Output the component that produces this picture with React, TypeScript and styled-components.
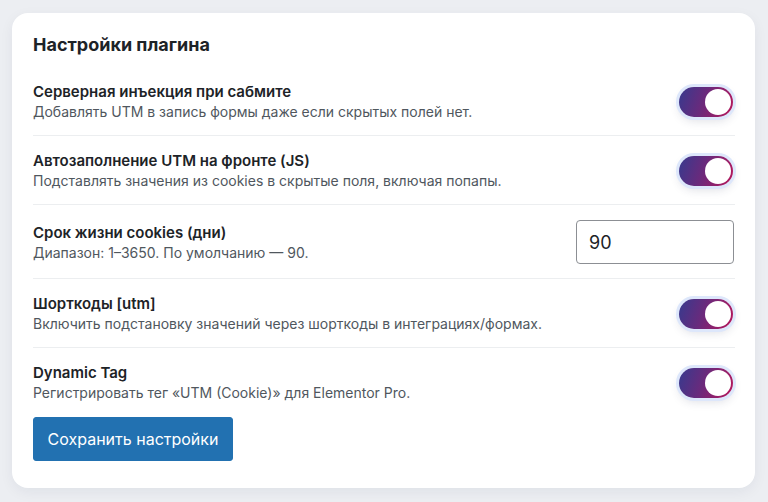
import styled, { createGlobalStyle } from 'styled-components';

const Global = createGlobalStyle`
  html, body {
    margin: 0;
    background: #eceef2;
    font-family: Inter, 'Noto Sans', sans-serif;
  }
`;

const settings = [
  { title: 'Серверная инъекция при сабмите', desc: 'Добавлять UTM в запись формы даже если скрытых полей нет.', kind: 'toggle' },
  { title: 'Автозаполнение UTM на фронте (JS)', desc: 'Подставлять значения из cookies в скрытые поля, включая попапы.', kind: 'toggle' },
  { title: 'Срок жизни cookies (дни)', desc: 'Диапазон: 1–3650. По умолчанию — 90.', kind: 'input' },
  { title: 'Шорткоды [utm]', desc: 'Включить подстановку значений через шорткоды в интеграциях/формах.', kind: 'toggle' },
  { title: 'Dynamic Tag', desc: 'Регистрировать тег «UTM (Cookie)» для Elementor Pro.', kind: 'toggle' },
];

export default function App() {
  return (
    <>
      <Global />
      <Page>
        <Card>
          <Title>Настройки плагина</Title>
          {settings.map((s, i) => (
            <Row key={s.title} $last={i === settings.length - 1}>
              <Text>
                <Label>{s.title}</Label>
                <Desc>{s.desc}</Desc>
              </Text>
              {s.kind === 'toggle' ? (
                <Switch>
                  <Knob />
                </Switch>
              ) : (
                <NumberInput defaultValue="90" />
              )}
            </Row>
          ))}
          <SaveButton>Сохранить настройки</SaveButton>
        </Card>
      </Page>
    </>
  );
}

const Page = styled.div`
  padding: 13px 13px 14px 12px;
  height: 502px;
  box-sizing: border-box;
`;

const Card = styled.div`
  background: #fff;
  border-radius: 16px;
  box-shadow: 0 4px 14px rgba(20, 30, 60, 0.06);
  padding: 20px 20px 26px 21px;
  height: 100%;
  box-sizing: border-box;
`;

const Title = styled.h2`
  margin: 0 0 10px;
  font-size: 18px;
  font-weight: 700;
  color: #1d2327;
  line-height: 24px;
`;

const Row = styled.div<{ $last?: boolean }>`
  display: flex;
  align-items: center;
  justify-content: space-between;
  padding: 15px 0 14px;
  box-sizing: border-box;
  border-bottom: ${(p) => (p.$last ? 'none' : '1px solid #eceef0')};
`;

const Text = styled.div`
  display: flex;
  flex-direction: column;
  gap: 2px;
`;

const Label = styled.div`
  font-size: 15px;
  font-weight: 600;
  color: #1d2327;
  line-height: 19px;
`;

const Desc = styled.div`
  font-size: 14px;
  color: #50575e;
  line-height: 18px;
`;

const Switch = styled.div`
  width: 54px;
  height: 30px;
  margin-right: 2px;
  border-radius: 15px;
  background: linear-gradient(110deg, #363a8e 0%, #6a2a7c 45%, #b8165a 100%);
  box-shadow: 0 0 0 3px #dde7fb, 0 4px 10px rgba(40, 50, 90, 0.15);
  display: flex;
  align-items: center;
  justify-content: flex-end;
  padding: 0 2px;
  box-sizing: border-box;
`;

const Knob = styled.div`
  width: 26px;
  height: 26px;
  border-radius: 50%;
  background: #fff;
`;

const NumberInput = styled.input`
  width: 158px;
  height: 44px;
  box-sizing: border-box;
  border: 1px solid #8c8f94;
  border-radius: 4px;
  padding: 0 12px;
  font-family: Inter, 'Noto Sans', sans-serif;
  font-size: 18px;
  color: #1d2327;
  margin-right: 1px;
  outline: none;
`;

const SaveButton = styled.button`
  margin-top: 1px;
  width: 200px;
  height: 44px;
  background: #2271b1;
  border: 1px solid #2271b1;
  border-radius: 3px;
  color: #fff;
  font-family: Inter, 'Noto Sans', sans-serif;
  font-size: 16px;
  cursor: pointer;
`;
